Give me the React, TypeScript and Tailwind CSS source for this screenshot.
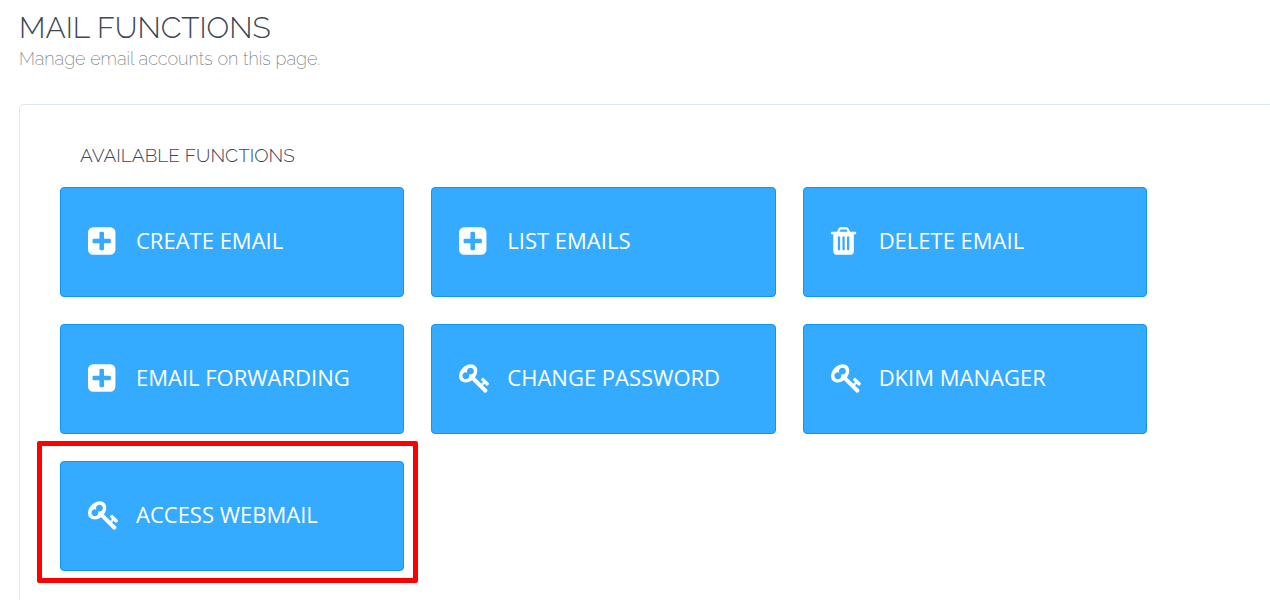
type IconName = "plus" | "trash" | "key";

const icons: Record<IconName, { viewBox: string; path: string }> = {
  plus: {
    viewBox: "128 0 1792 1792",
    path: "M1408 960v-128q0-26-19-45t-45-19h-320v-320q0-26-19-45t-45-19h-128q-26 0-45 19t-19 45v320h-320q-26 0-45 19t-19 45v128q0 26 19 45t45 19h320v320q0 26 19 45t45 19h128q26 0 45-19t19-45v-320h320q26 0 45-19t19-45zm256-544v960q0 119-84.5 203.5t-203.5 84.5h-960q-119 0-203.5-84.5t-84.5-203.5v-960q0-119 84.5-203.5t203.5-84.5h960q119 0 203.5 84.5t84.5 203.5z",
  },
  trash: {
    viewBox: "192 0 1792 1792",
    path: "M704 1376v-704q0-14-9-23t-23-9h-64q-14 0-23 9t-9 23v704q0 14 9 23t23 9h64q14 0 23-9t9-23zm256 0v-704q0-14-9-23t-23-9h-64q-14 0-23 9t-9 23v704q0 14 9 23t23 9h64q14 0 23-9t9-23zm256 0v-704q0-14-9-23t-23-9h-64q-14 0-23 9t-9 23v704q0 14 9 23t23 9h64q14 0 23-9t9-23zm-544-992h448l-48-117q-7-9-17-11h-317q-10 2-17 11zm928 32v64q0 14-9 23t-23 9h-96v948q0 83-47 143.5t-113 60.5h-832q-66 0-113-58.5t-47-141.5v-952h-96q-14 0-23-9t-9-23v-64q0-14 9-23t23-9h309l70-167q15-37 54-63t79-26h320q40 0 79 26t54 63l70 167h309q14 0 23 9t9 23z",
  },
  key: {
    viewBox: "0 0 1792 1792",
    path: "M832 512q0-80-56-136t-136-56-136 56-56 136q0 42 19 83-41-19-83-19-80 0-136 56t-56 136 56 136 136 56 136-56 56-136q0-42-19-83 41 19 83 19 80 0 136-56t56-136zm851 704q0 17-49 66t-66 49q-9 0-28.5-16t-36.5-33-38.5-40-24.5-26l-96 96 220 220q28 28 28 68 0 42-39 81t-81 39q-40 0-68-28l-671-671q-176 131-365 131-163 0-265.5-102.5t-102.5-265.5q0-160 95-313t248-248 313-95q163 0 265.5 102.5t102.5 265.5q0 189-131 365l355 355 96-96q-3-3-26-24.5t-40-38.5-33-36.5-16-28.5q0-17 49-66t66-49q13 0 23 10 6 6 46 44.5t82 79.5 86.5 86 73 78 28.5 41z",
  },
};

const functions: { label: string; icon: IconName; highlighted?: boolean }[] = [
  { label: "CREATE EMAIL", icon: "plus" },
  { label: "LIST EMAILS", icon: "plus" },
  { label: "DELETE EMAIL", icon: "trash" },
  { label: "EMAIL FORWARDING", icon: "plus" },
  { label: "CHANGE PASSWORD", icon: "key" },
  { label: "DKIM MANAGER", icon: "key" },
  { label: "ACCESS WEBMAIL", icon: "key", highlighted: true },
];

function Icon({ name }: { name: IconName }) {
  return (
    <svg
      viewBox={icons[name].viewBox}
      className="size-8 shrink-0 fill-current"
      aria-hidden="true"
    >
      <path d={icons[name].path} />
    </svg>
  );
}

export default function App() {
  return (
    <main className="flex min-h-screen flex-col bg-white pl-[19px] font-['Raleway','Lato',sans-serif]">
      <header className="pt-2">
        <h1 className="text-[30px] leading-10 font-light text-[#3e4855]">MAIL FUNCTIONS</h1>
        <p className="text-lg leading-[22px] font-extralight text-[#6f767e]">
          Manage email accounts on this page.
        </p>
      </header>

      <section className="mt-[34px] grow rounded-tl-[5px] border-t border-l border-[#dfe8f1] pt-10 pr-[123px] pb-10 pl-10">
        <h2 className="pl-5 text-[19px] leading-5 font-light text-[#3e4855]">AVAILABLE FUNCTIONS</h2>
        <ul className="mt-[22px] grid grid-cols-3 gap-[27px]">
          {functions.map(({ label, icon, highlighted }) => (
            <li key={label} className="relative">
              <button
                type="button"
                className="flex h-[110px] w-full cursor-pointer items-center gap-4 rounded border border-[#0c96f9] bg-[#35abff] pb-0.5 pl-[27px] text-left font-['Open_Sans',sans-serif] text-[22px] leading-8 text-white"
              >
                <Icon name={icon} />
                <span className="pb-0.5">{label}</span>
              </button>
              {highlighted && (
                <span className="pointer-events-none absolute -top-5 -right-3.5 -bottom-3 -left-[23px] rounded-xs border-5 border-[#ff0000]" />
              )}
            </li>
          ))}
        </ul>
      </section>
    </main>
  );
}
